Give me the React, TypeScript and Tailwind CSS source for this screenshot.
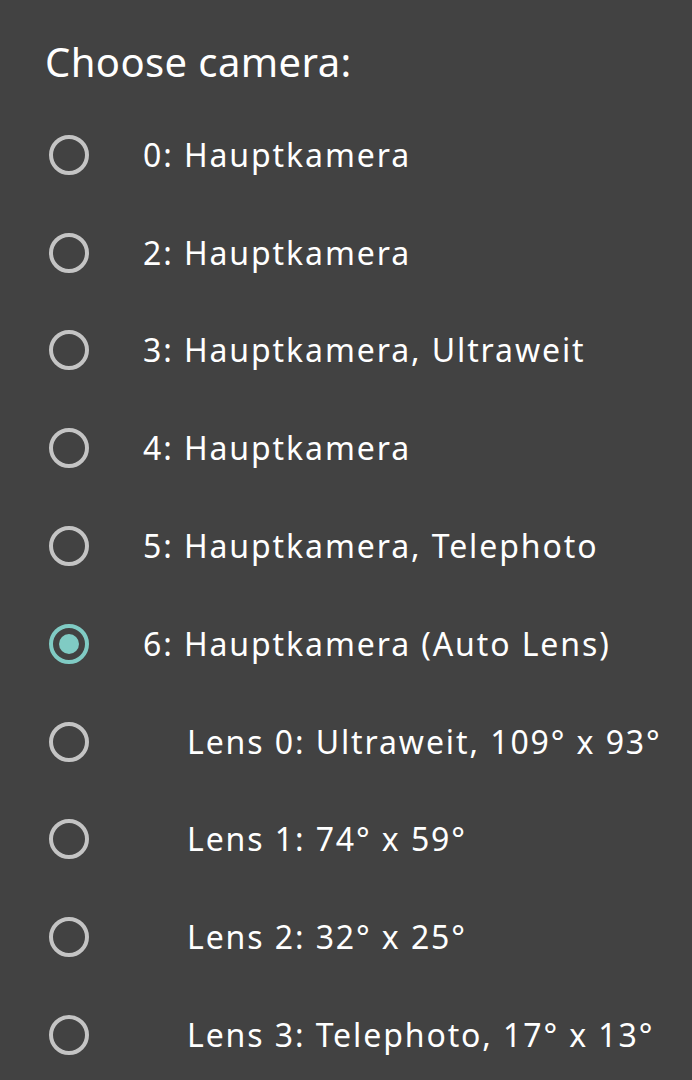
const options = [
  { label: "0: Hauptkamera", indent: false },
  { label: "2: Hauptkamera", indent: false },
  { label: "3: Hauptkamera, Ultraweit", indent: false },
  { label: "4: Hauptkamera", indent: false },
  { label: "5: Hauptkamera, Telephoto", indent: false },
  { label: "6: Hauptkamera (Auto Lens)", indent: false },
  { label: "Lens 0: Ultraweit, 109° x 93°", indent: true },
  { label: "Lens 1: 74° x 59°", indent: true },
  { label: "Lens 2: 32° x 25°", indent: true },
  { label: "Lens 3: Telephoto, 17° x 13°", indent: true },
];

const selected = 5;

function Radio({ checked }: { checked: boolean }) {
  return (
    <div
      className={
        checked
          ? "flex h-10 w-10 shrink-0 items-center justify-center rounded-full border-[4px] border-[#80cbc4]"
          : "flex h-10 w-10 shrink-0 items-center justify-center rounded-full border-[4px] border-[#c4c4c4]"
      }
    >
      {checked && <div className="h-5 w-5 rounded-full bg-[#80cbc4]" />}
    </div>
  );
}

export default function App() {
  return (
    <div
      className="h-[1080px] w-[692px] overflow-hidden bg-[#424242] text-white"
      style={{ fontFamily: '"Noto Sans", "Open Sans", sans-serif' }}
    >
      <div className="flex h-[106px] items-center pl-[45px] pt-[18px]">
        <h1 className="text-[40px] leading-none tracking-[0.4px]">Choose camera:</h1>
      </div>

      <ul>
        {options.map((opt, i) => (
          <li key={opt.label} className="flex h-[97.8px] items-center pl-[49px]">
            <Radio checked={i === selected} />
            <span
              className={
                opt.indent
                  ? "ml-[98px] whitespace-nowrap text-[32px] leading-none tracking-[1.9px]"
                  : "ml-[54px] whitespace-nowrap text-[32px] leading-none tracking-[1.9px]"
              }
            >
              {opt.label}
            </span>
          </li>
        ))}
      </ul>
    </div>
  );
}
